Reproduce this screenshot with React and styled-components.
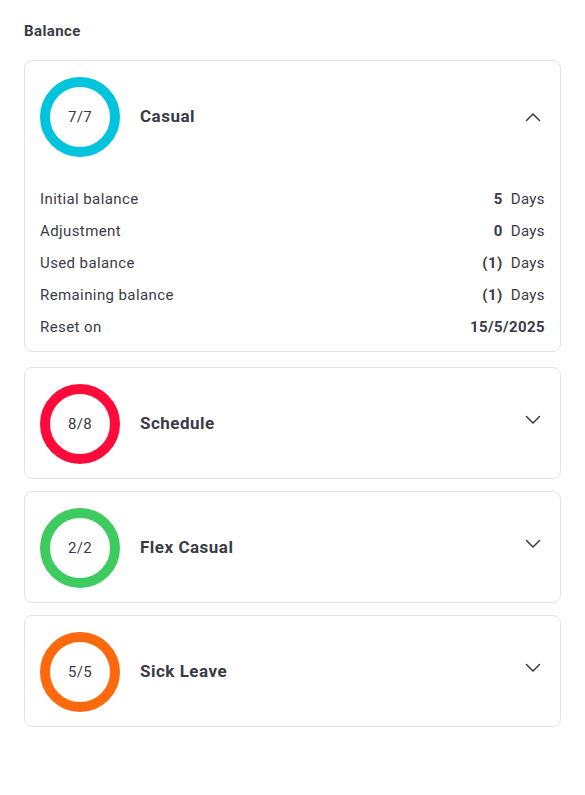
import React from "react";
import styled, { createGlobalStyle } from "styled-components";

const Global = createGlobalStyle`
body { margin: 0; background: #fff; font-family: "Roboto", "Liberation Sans", sans-serif; color: #3b3b46; }
`;

const Page = styled.main`
padding: 22px 24px 24px 24px;
`;

const Heading = styled.h1`
margin: 0 0 19px 0;
font-size: 15px;
font-weight: 700;
line-height: 19px;
letter-spacing: 0.4px;
color: #3b3b46;
`;

const List = styled.div`
display: flex;
flex-direction: column;
gap: 12px;
`;

const Card = styled.section`
border: 1px solid #e3e3e6;
border-radius: 8px;
padding: 16px 15px 14px 15px;
margin-bottom: ${p => (p.$open ? "3px" : "0")};
padding-bottom: ${p => (p.$open ? "8px" : "14px")};
`;

const Header = styled.div`
display: flex;
align-items: center;
`;

const Ring = styled.div`
width: 80px;
height: 80px;
box-sizing: border-box;
border-radius: 50%;
border: 10px solid ${p => p.$color};
display: flex;
align-items: center;
justify-content: center;
font-size: 15px;
letter-spacing: 0.3px;
color: #3b3b46;
flex-shrink: 0;
`;

const Title = styled.h2`
margin: -2px 0 0 20px;
flex: 1;
font-size: 17px;
font-weight: 700;
letter-spacing: 0.5px;
color: #3b3b46;
`;

const Toggle = styled.span`
width: 24px;
height: 24px;
display: flex;
align-items: center;
justify-content: center;
margin-top: ${p => (p.$open ? "0" : "-8px")};
color: #3b3b46;
`;

const Rows = styled.div`
margin-top: 26px;
display: flex;
flex-direction: column;
`;

const Row = styled.div`
display: flex;
justify-content: space-between;
align-items: center;
height: 32px;
font-size: 15px;
letter-spacing: 0.4px;
`;

const Value = styled.span`
display: flex;
gap: 8px;
b { font-weight: 700; }
`;

const Chevron = ({ up }) => (
  <svg width="16" height="10" viewBox="0 0 16 10" fill="none" stroke="currentColor" strokeWidth="1.5" strokeLinecap="round" strokeLinejoin="round">
    {up ? <polyline points="1.5,8.5 8,2 14.5,8.5" /> : <polyline points="1.5,1.5 8,8 14.5,1.5" />}
  </svg>
);

const items = [
  { name: "Casual", value: "7/7", color: "#00c3dc", open: true },
  { name: "Schedule", value: "8/8", color: "#ff0a3b" },
  { name: "Flex Casual", value: "2/2", color: "#3ecb60" },
  { name: "Sick Leave", value: "5/5", color: "#ff690c" },
];

const details = [
  ["Initial balance", "5", "Days"],
  ["Adjustment", "0", "Days"],
  ["Used balance", "(1)", "Days"],
  ["Remaining balance", "(1)", "Days"],
  ["Reset on", "15/5/2025", ""],
];

export default function App() {
  return (
    <Page>
      <Global />
      <Heading>Balance</Heading>
      <List>
        {items.map(it => (
          <Card key={it.name} $open={it.open}>
            <Header>
              <Ring $color={it.color}>{it.value}</Ring>
              <Title>{it.name}</Title>
              <Toggle $open={it.open}><Chevron up={it.open} /></Toggle>
            </Header>
            {it.open && (
              <Rows>
                {details.map(([label, num, unit]) => (
                  <Row key={label}>
                    <span>{label}</span>
                    <Value><b>{num}</b>{unit && <span>{unit}</span>}</Value>
                  </Row>
                ))}
              </Rows>
            )}
          </Card>
        ))}
      </List>
    </Page>
  );
}
